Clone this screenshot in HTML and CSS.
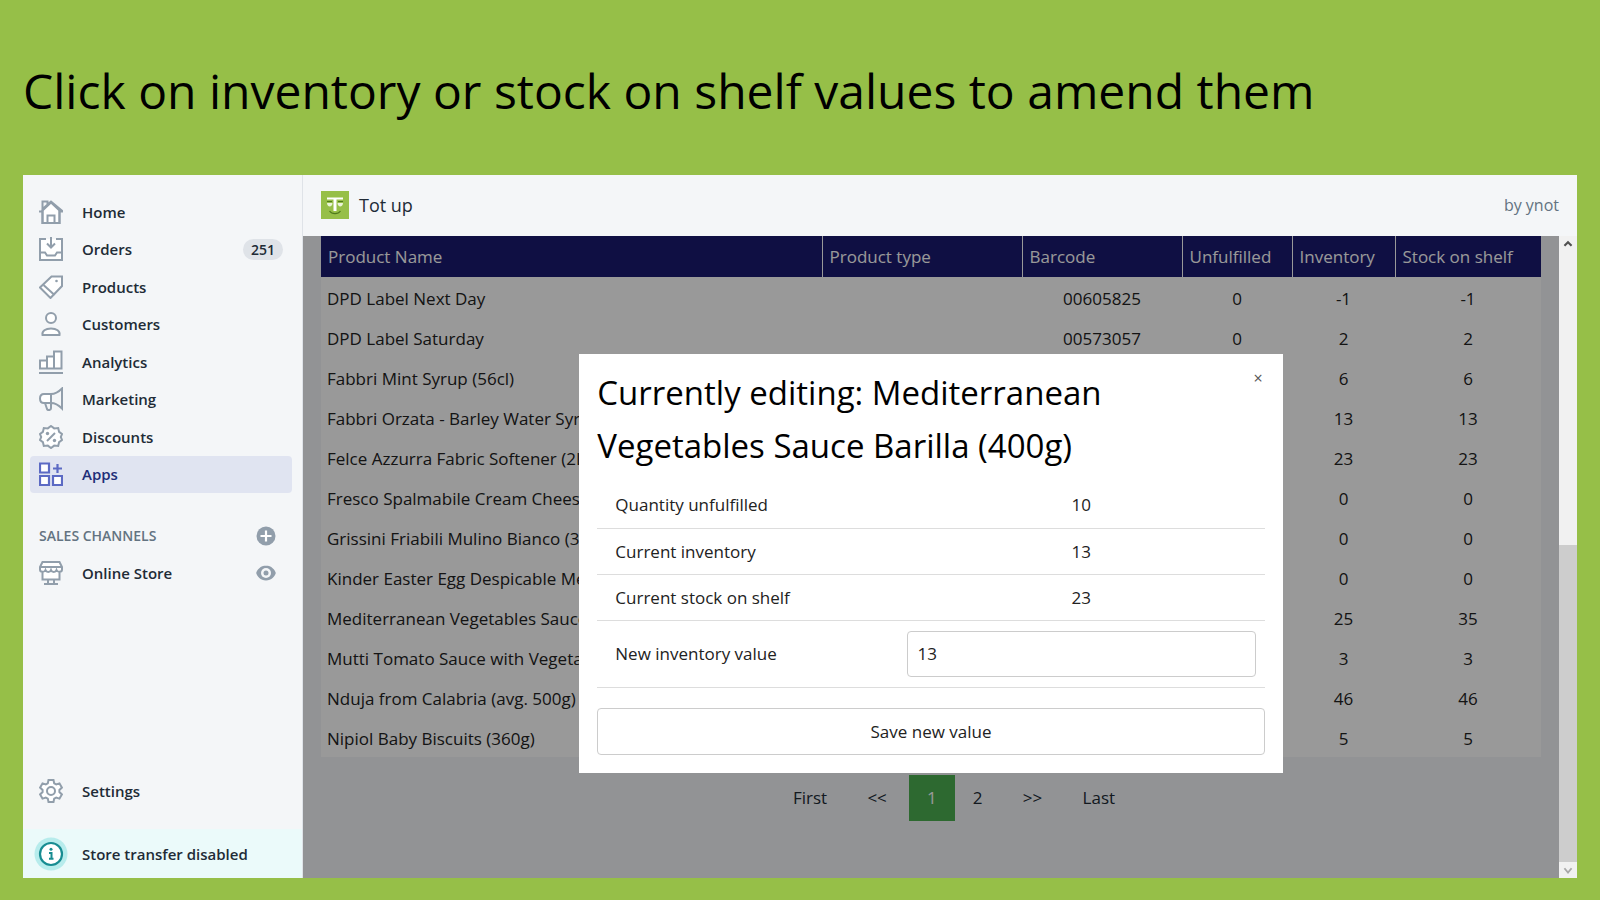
FILE: index.html
```html
<!DOCTYPE html>
<html lang="en">
<head>
  <meta charset="utf-8">
  <title>Tot up</title>
  <link rel="stylesheet" href="styles.css">
</head>
<body>
  <h1 class="headline">Click on inventory or stock on shelf values to amend them</h1>

  <div class="window">
    <aside class="sidebar">
      <nav class="menu">
        <a href="#"><svg class="icon" viewBox="0 0 24 24"><path fill="#fff" d="M3.500 10.500V23h17V10.500L12 2.500z"/><path d="M0 11.500h3.500V1.500h5v3.500M3.500 11V23h17V11.500H24L12 1.500l-9 8"/><path d="M8.500 23v-7.500h7V23"/></svg>Home</a>
        <a href="#"><svg class="icon" viewBox="0 0 24 24"><path fill="#fff" d="M7 2H1v21h22V2h-6"/><path d="M1 15.500h5l2 3h8l2-3h5M12 0v10M8 6.500l4 4 4-4"/></svg>Orders <span class="badge">251</span></a>
        <a href="#"><svg class="icon" viewBox="0 0 24 24"><path fill="#fff" d="M12.500 1.500H23v9.500L11.500 23 1 12.500z"/><path d="M4.500 10l11 10"/><circle class="solid" cx="17.500" cy="6" r="1.300"/></svg>Products</a>
        <a href="#"><svg class="icon" viewBox="0 0 24 24"><circle fill="#fff" cx="12" cy="6" r="5"/><path fill="#fff" d="M3.500 23c-.8-4 3-6.500 8.500-6.500s9.300 2.500 8.500 6.500z"/></svg>Customers</a>
        <a href="#"><svg class="icon" viewBox="0 0 24 24"><path fill="#fff" d="M1 18.500v-8h7v8zM8 18.500v-12h7v12zM15 18.500V1.500h7.500v17z"/><path d="M0 23h24"/></svg>Analytics</a>
        <a href="#"><svg class="icon" viewBox="0 0 24 24"><path fill="#fff" d="M12 7H5C2.500 7 1 9 1 11.500S2.500 16 5 16h7z"/><path d="M12 7c4 0 8-2.500 11-5.500v20C20 18.500 16 16 12 16M6 16l2 6c.8 1.800 4 1.300 4-.8V16"/></svg>Marketing</a>
        <a href="#"><svg class="icon" viewBox="0 0 24 24"><path fill="#fff" d="M12 1l3.200 2.400 4-.4.900 3.900L23 9l-1.200 3L23 15l-2.900 2.100-.9 3.900-4-.4L12 23l-3.200-2.400-4 .4-.9-3.900L1 15l1.200-3L1 9l2.900-2.100L4.800 3l4 .4z"/><path d="M8 16l8-8"/><circle class="solid" cx="8.500" cy="8.500" r="1.700"/><circle class="solid" cx="15.500" cy="15.500" r="1.700"/></svg>Discounts</a>
        <a href="#" class="active"><svg class="icon" viewBox="0 0 24 24"><path fill="#fff" d="M1 1.500h9v9H1zM1 14h9v9H1zM14 14h9v9h-9z"/><path d="M18.500 2v9M14 6.500h9"/></svg>Apps</a>
      </nav>

      <div class="channels">
        <span>SALES CHANNELS</span>
        <button class="round" aria-label="Add sales channel"><svg viewBox="0 0 20 20"><circle cx="10" cy="10" r="9.500" fill="#919eab"/><path d="M10 4.500v11M4.500 10h11" stroke="#fff" stroke-width="2.200"/></svg></button>
      </div>
      <div class="menu store">
        <a href="#"><svg class="icon" viewBox="0 0 24 24"><path fill="#fff" d="M3.500 10v8.500h17V10M3.500 1h17L23 6v2.500c0 3-4.500 3-5.500.5-1 2.500-4.500 2.500-5.500 0-1 2.500-4.500 2.500-5.500 0C5.500 11.500 1 11.500 1 8.500V6z"/><path d="M1.500 6h21M9 18.500V23m6-4.500V23M5 23h14"/></svg>Online Store</a>
        <button class="round" aria-label="View online store"><svg viewBox="0 0 20 20"><path fill="#919eab" d="M10 2.500c-5.500 0-9 4.500-9.800 7.500.8 3 4.300 7.500 9.800 7.500s9-4.500 9.800-7.500c-.8-3-4.300-7.500-9.800-7.500z"/><circle cx="10" cy="10" r="5" fill="#f4f6f8"/><circle cx="10" cy="10" r="2.500" fill="#919eab"/></svg></button>
      </div>

      <div class="menu settings">
        <a href="#"><svg class="icon" viewBox="0 0 24 24"><path fill="#fff" d="M9.500 1h5l.7 3.400 2 1.100 3.300-1.100 2.400 4.200-2.500 2.300v2.200l2.500 2.300-2.400 4.200-3.300-1.100-2 1.100-.7 3.400h-5l-.7-3.400-2-1.100-3.300 1.100-2.400-4.200 2.500-2.300v-2.200L1.100 8.600l2.400-4.200 3.300 1.100 2-1.100z"/><circle cx="12" cy="12" r="4"/></svg>Settings</a>
      </div>
      <div class="notice">
        <svg viewBox="0 0 34 34"><circle cx="17" cy="17" r="16.500" fill="#b7ecec"/><circle cx="17" cy="17" r="11" fill="#fff" stroke="#178c92" stroke-width="2.200"/><path d="M15 16h2.500v5.500M15 21.700h4.500" fill="none" stroke="#178c92" stroke-width="2"/><circle cx="17" cy="12.300" r="1.500" fill="#178c92"/></svg>
        Store transfer disabled
      </div>
    </aside>

    <main class="main">
      <header class="topbar">
        <svg class="logo" viewBox="0 0 28 28"><path fill="#96bf48" d="M0 0h28v28H0z"/><path fill="#fff" d="M6 6.500h16v2h-6.500V20h-3V8.500H6z"/><path fill="#eaf4d8" d="M6 12h5.500c0 4.500-5.500 4.500-5.500 0zM16.500 12H22c0 4.500-5.500 4.500-5.500 0z"/><path d="M6 10.500h5M17 10.500h5M8.500 20c2.500 3.500 8.500 3.500 11 0" fill="none" stroke="#4f7a1c" stroke-width="1.200"/></svg>
        <span class="app-name">Tot up</span>
        <span class="author">by ynot</span>
      </header>

      <div class="content">
        <div class="page">
          <table class="products">
            <colgroup><col><col class="c-type"><col class="c-code"><col class="c-unf"><col class="c-inv"><col class="c-shelf"></colgroup>
            <thead>
              <tr><th>Product Name</th><th>Product type</th><th>Barcode</th><th>Unfulfilled</th><th>Inventory</th><th>Stock on shelf</th></tr>
            </thead>
            <tbody>
              <tr><td>DPD Label Next Day</td><td></td><td>00605825</td><td>0</td><td>-1</td><td>-1</td></tr>
              <tr><td>DPD Label Saturday</td><td></td><td>00573057</td><td>0</td><td>2</td><td>2</td></tr>
              <tr><td>Fabbri Mint Syrup (56cl)</td><td></td><td></td><td></td><td>6</td><td>6</td></tr>
              <tr><td>Fabbri Orzata - Barley Water Syrup</td><td></td><td></td><td></td><td>13</td><td>13</td></tr>
              <tr><td>Felce Azzurra Fabric Softener (2L)</td><td></td><td></td><td></td><td>23</td><td>23</td></tr>
              <tr><td>Fresco Spalmabile Cream Cheese</td><td></td><td></td><td></td><td>0</td><td>0</td></tr>
              <tr><td>Grissini Friabili Mulino Bianco (300g)</td><td></td><td></td><td></td><td>0</td><td>0</td></tr>
              <tr><td>Kinder Easter Egg Despicable Me</td><td></td><td></td><td></td><td>0</td><td>0</td></tr>
              <tr><td>Mediterranean Vegetables Sauce</td><td></td><td></td><td></td><td>25</td><td>35</td></tr>
              <tr><td>Mutti Tomato Sauce with Vegetables</td><td></td><td></td><td></td><td>3</td><td>3</td></tr>
              <tr><td>Nduja from Calabria (avg. 500g)</td><td></td><td></td><td></td><td>46</td><td>46</td></tr>
              <tr><td>Nipiol Baby Biscuits (360g)</td><td></td><td></td><td></td><td>5</td><td>5</td></tr>
            </tbody>
          </table>
          <div class="pagination">
            <a href="#">First</a><a href="#" class="step">&lt;&lt;</a><a href="#" class="current">1</a><a href="#">2</a><a href="#" class="step">&gt;&gt;</a><a href="#">Last</a>
          </div>

          <!-- edit dialog -->
          <div class="overlay">
            <form class="modal">
              <div class="modal-head">
                <h2>Currently editing: Mediterranean Vegetables Sauce Barilla (400g)</h2>
                <button type="button" class="close" aria-label="Close">×</button>
              </div>
              <table class="details">
                <tr><td>Quantity unfulfilled</td><td>10</td></tr>
                <tr><td>Current inventory</td><td>13</td></tr>
                <tr><td>Current stock on shelf</td><td>23</td></tr>
                <tr class="edit"><td><label for="newValue">New inventory value</label></td><td><input type="text" id="newValue" value="13"></td></tr>
              </table>
              <button type="submit" class="save">Save new value</button>
            </form>
          </div>
        </div>

        <div class="scrollbar">
          <svg viewBox="0 0 18 18"><path d="M5 11l4-4 4 4" fill="none" stroke="#505050" stroke-width="2.400"/></svg>
          <div class="track"><div class="thumb"></div></div>
          <svg viewBox="0 0 18 18"><path d="M5 7l4 5 4-5" fill="none" stroke="#a8a8a8" stroke-width="2"/></svg>
        </div>
      </div>
    </main>
  </div>
</body>
</html>
```
FILE: styles.css
```css
* {
  box-sizing: border-box;
}

body {
  margin: 0;
  min-height: 100vh;
  padding: 0 23px 22px;
  display: flex;
  flex-direction: column;
  background-color: #96bf48;
  color: #212b36;
  font-family: "Open Sans", "Noto Sans", sans-serif;
  font-size: 17px;
}

a {
  color: inherit;
  text-decoration: none;
}

button {
  font-family: inherit;
  cursor: pointer;
}

.headline {
  margin: 0;
  padding: 57px 0 50px;
  font-size: 48px;
  line-height: 68px;
  font-weight: 400;
  color: #000;
}

.window {
  flex: 1;
  display: flex;
  background-color: #f4f6f8;
}

/* sidebar */
.sidebar {
  width: 280px;
  padding-top: 18px;
  display: flex;
  flex-direction: column;
  border-right: 1px solid #dfe3e8;
  font-size: 15px;
  font-weight: 600;
}

.menu {
  display: grid;
  grid-auto-rows: 1fr;
  height: 300px;
  padding: 0 10px 0 7px;
}

.menu a {
  display: flex;
  align-items: center;
  padding: 0 9px;
  border-radius: 4px;
}

.menu .active {
  background-color: #e0e4f1;
  color: #202e78;
}

.icon {
  width: 24px;
  height: 24px;
  margin-right: 19px;
  fill: none;
  stroke: #919eab;
  stroke-width: 2;
}

.icon .solid {
  fill: #919eab;
  stroke: none;
}

.active .icon {
  stroke: #5c6ac4;
  stroke-width: 2.2;
}

.badge {
  margin-left: auto;
  padding: 0 8px;
  border-radius: 11px;
  background-color: #dfe3e8;
  font-size: 14px;
  line-height: 21px;
}

.channels {
  display: flex;
  align-items: center;
  justify-content: space-between;
  margin-top: 24px;
  height: 37px;
  padding: 0 26px 0 16px;
  color: #637381;
  font-size: 14px;
}

.round {
  width: 20px;
  height: 20px;
  padding: 0;
  border: none;
  background: none;
}

.round svg {
  display: block;
}

.store {
  height: 38px;
  padding-right: 26px;
  grid-template-columns: 1fr auto;
  align-items: center;
}

.settings {
  height: 38px;
  margin-top: auto;
  margin-bottom: 19px;
}

.notice {
  display: flex;
  align-items: center;
  gap: 14px;
  height: 49px;
  padding-left: 11px;
  background-color: #ebfafa;
}

.notice svg {
  width: 34px;
  height: 34px;
}

/* main area */
.main {
  flex: 1;
  display: flex;
  flex-direction: column;
}

.topbar {
  display: flex;
  align-items: center;
  height: 61px;
  padding: 0 18px 2px;
}

.logo {
  width: 28px;
  height: 28px;
  margin-right: 10px;
}

.app-name {
  font-size: 18px;
}

.author {
  margin-left: auto;
  color: #637381;
  font-size: 16px;
}

.content {
  flex: 1;
  display: flex;
}

.page {
  position: relative;
  flex: 1;
  padding: 0 18px;
}

.products {
  width: 100%;
  table-layout: fixed;
  border-collapse: collapse;
  background-color: #fff;
}

.c-type { width: 200px; }
.c-code { width: 160px; }
.c-unf { width: 110px; }
.c-inv { width: 103px; }
.c-shelf { width: 146px; }

.products th {
  height: 41px;
  padding: 0 7px;
  background-color: #191970;
  color: #fff;
  font-weight: 400;
  text-align: left;
}

.products th + th {
  border-left: 1px solid #fff;
}

.products td {
  height: 40px;
  padding: 3px 6px 0;
  color: #222;
  text-align: center;
  white-space: nowrap;
}

.products td:first-child {
  text-align: left;
}

.pagination {
  display: flex;
  justify-content: center;
  margin-top: 18px;
  padding-left: 46px;
}

.pagination a {
  padding: 0 18px;
  line-height: 46px;
  text-align: center;
}

.pagination .step {
  min-width: 64px;
}

.pagination .current {
  background-color: #4caf50;
  color: #fff;
}

/* dialog */
.overlay {
  position: absolute;
  inset: 0;
  padding-top: 118px;
  background-color: rgba(0, 0, 0, 0.4);
}

.modal {
  width: 56%;
  margin: 0 auto;
  padding: 12px 18px 18px;
  background-color: #fff;
  color: #222;
}

.modal-head {
  display: flex;
  align-items: flex-start;
  margin-bottom: 10px;
}

.modal h2 {
  flex: 1;
  margin: 0;
  padding-right: 60px;
  color: #000;
  font-size: 33px;
  line-height: 53px;
  font-weight: 400;
}

.close {
  padding: 2px;
  border: none;
  background: none;
  color: #555;
  font-size: 16px;
  line-height: 20px;
}

.details {
  width: 100%;
  margin-bottom: 20px;
  border-collapse: collapse;
}

.details td {
  width: 55%;
  height: 46px;
  padding: 0 9px;
  border-bottom: 1px solid #ddd;
  text-align: center;
}

.details td:first-child {
  width: 45%;
  padding-left: 18px;
  text-align: left;
}

.details .edit td {
  height: 67px;
}

.details input {
  display: block;
  width: 100%;
  height: 46px;
  padding: 0 10px;
  border: 1px solid #ccc;
  border-radius: 4px;
  color: inherit;
  font: inherit;
}

.save {
  display: block;
  width: 100%;
  height: 47px;
  border: 1px solid #ccc;
  border-radius: 4px;
  background-color: #fff;
  color: inherit;
  font-size: 17px;
}

/* scrollbar */
.scrollbar {
  display: flex;
  flex-direction: column;
  width: 18px;
  background-color: #f1f1f1;
}

.scrollbar svg {
  width: 18px;
  height: 16px;
}

.track {
  flex: 1;
  display: flex;
  align-items: flex-end;
}

.thumb {
  width: 100%;
  height: 52%;
  background-color: #cdcdcd;
}
```
